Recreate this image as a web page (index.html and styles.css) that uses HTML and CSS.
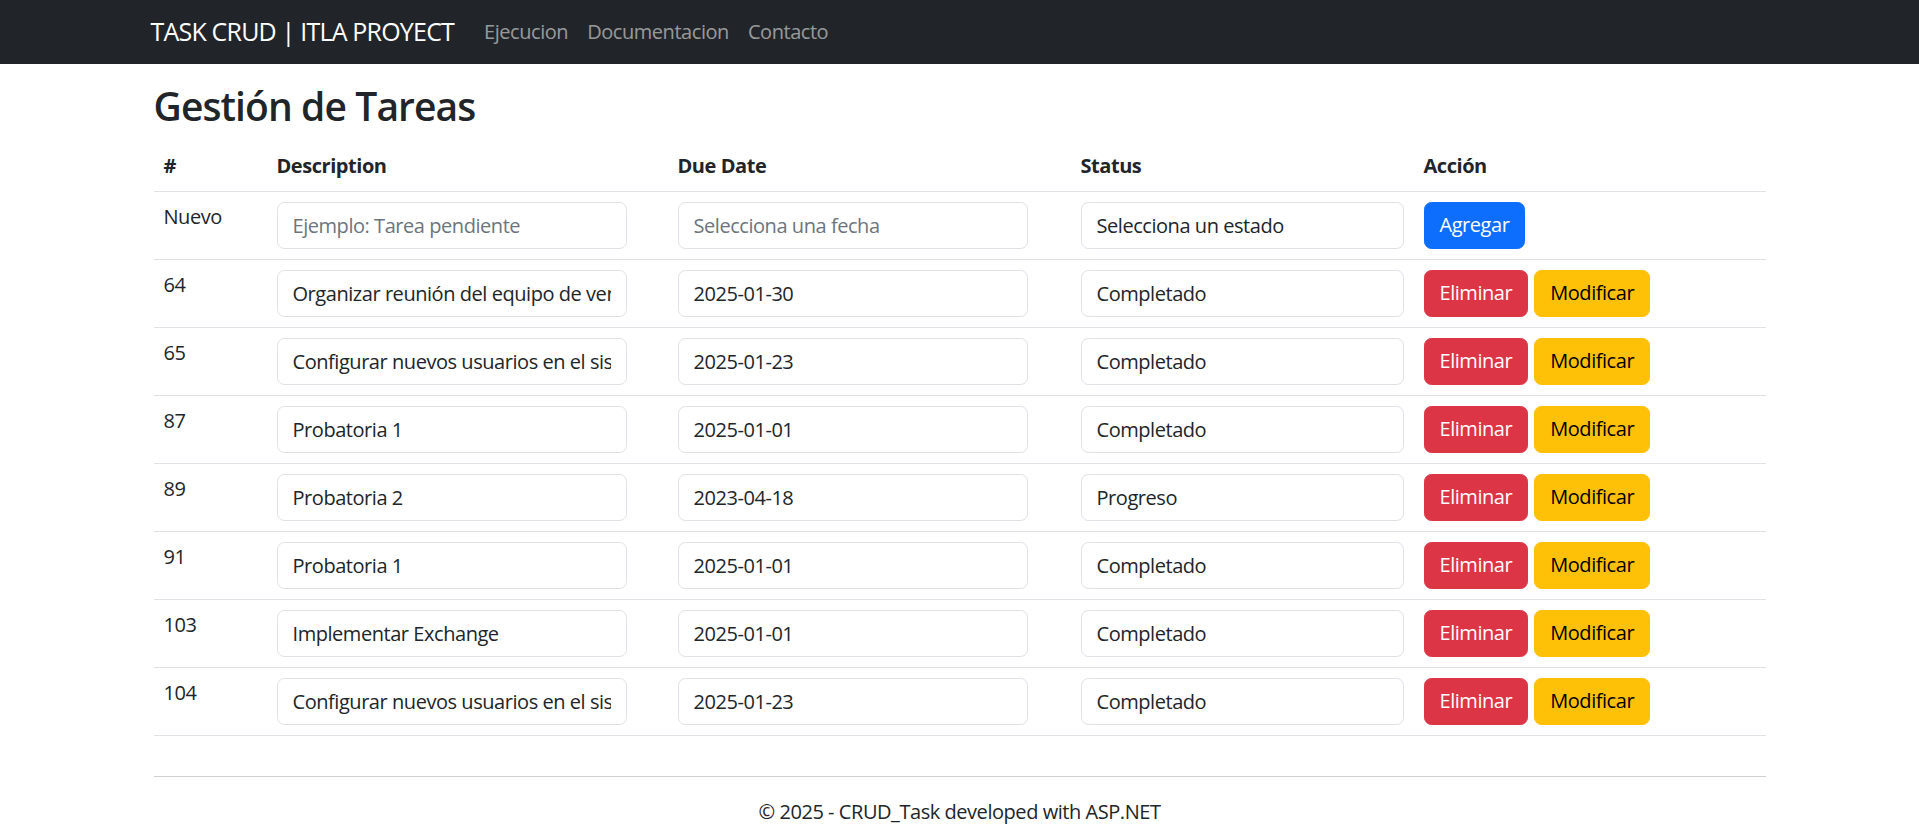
FILE: index.html
```html
<!DOCTYPE html>
<html lang="es">
<head>
<meta charset="utf-8">
<title>Gestión de Tareas - CRUD_Task</title>
<link rel="stylesheet" href="styles.css">
</head>
<body>
<header class="navbar">
  <div class="nav-container">
    <a class="brand" href="#">TASK CRUD | ITLA PROYECT</a>
    <ul class="nav-links">
      <li><a href="#">Ejecucion</a></li>
      <li><a href="#">Documentacion</a></li>
      <li><a href="#">Contacto</a></li>
    </ul>
  </div>
</header>

<main class="container">
  <h1 class="title">Gestión de Tareas</h1>
  <table class="tasks">
    <colgroup>
      <col class="c-id"><col class="c-desc"><col class="c-date"><col class="c-status"><col class="c-action">
    </colgroup>
    <thead>
      <tr><th>#</th><th>Description</th><th>Due Date</th><th>Status</th><th>Acción</th></tr>
    </thead>
    <tbody>
      <tr>
        <td>Nuevo</td>
        <td><input class="field field-fixed" type="text" placeholder="Ejemplo: Tarea pendiente"></td>
        <td><input class="field field-fixed" type="text" placeholder="Selecciona una fecha"></td>
        <td><input class="field" type="text" value="Selecciona un estado"></td>
        <td><button class="btn btn-primary">Agregar</button></td>
      </tr>
      <tr>
        <td>64</td>
        <td><input class="field field-fixed" type="text" value="Organizar reunión del equipo de ventas"></td>
        <td><input class="field field-fixed" type="text" value="2025-01-30"></td>
        <td><input class="field" type="text" value="Completado"></td>
        <td><div class="actions"><button class="btn btn-danger">Eliminar</button><button class="btn btn-warning">Modificar</button></div></td>
      </tr>
      <tr>
        <td>65</td>
        <td><input class="field field-fixed" type="text" value="Configurar nuevos usuarios en el sistema"></td>
        <td><input class="field field-fixed" type="text" value="2025-01-23"></td>
        <td><input class="field" type="text" value="Completado"></td>
        <td><div class="actions"><button class="btn btn-danger">Eliminar</button><button class="btn btn-warning">Modificar</button></div></td>
      </tr>
      <tr>
        <td>87</td>
        <td><input class="field field-fixed" type="text" value="Probatoria 1"></td>
        <td><input class="field field-fixed" type="text" value="2025-01-01"></td>
        <td><input class="field" type="text" value="Completado"></td>
        <td><div class="actions"><button class="btn btn-danger">Eliminar</button><button class="btn btn-warning">Modificar</button></div></td>
      </tr>
      <tr>
        <td>89</td>
        <td><input class="field field-fixed" type="text" value="Probatoria 2"></td>
        <td><input class="field field-fixed" type="text" value="2023-04-18"></td>
        <td><input class="field" type="text" value="Progreso"></td>
        <td><div class="actions"><button class="btn btn-danger">Eliminar</button><button class="btn btn-warning">Modificar</button></div></td>
      </tr>
      <tr>
        <td>91</td>
        <td><input class="field field-fixed" type="text" value="Probatoria 1"></td>
        <td><input class="field field-fixed" type="text" value="2025-01-01"></td>
        <td><input class="field" type="text" value="Completado"></td>
        <td><div class="actions"><button class="btn btn-danger">Eliminar</button><button class="btn btn-warning">Modificar</button></div></td>
      </tr>
      <tr>
        <td>103</td>
        <td><input class="field field-fixed" type="text" value="Implementar Exchange"></td>
        <td><input class="field field-fixed" type="text" value="2025-01-01"></td>
        <td><input class="field" type="text" value="Completado"></td>
        <td><div class="actions"><button class="btn btn-danger">Eliminar</button><button class="btn btn-warning">Modificar</button></div></td>
      </tr>
      <tr>
        <td>104</td>
        <td><input class="field field-fixed" type="text" value="Configurar nuevos usuarios en el sistema"></td>
        <td><input class="field field-fixed" type="text" value="2025-01-23"></td>
        <td><input class="field" type="text" value="Completado"></td>
        <td><div class="actions"><button class="btn btn-danger">Eliminar</button><button class="btn btn-warning">Modificar</button></div></td>
      </tr>
    </tbody>
  </table>
</main>

<footer class="footer">
  <div class="footer-inner">© 2025 - CRUD_Task developed with ASP.NET</div>
</footer>
</body>
</html>
```

FILE: styles.css
```css
* { box-sizing: border-box; }

html, body {
  margin: 0;
  padding: 0;
  background: #fff;
}

body {
  font-family: "Open Sans", "Noto Sans", "DejaVu Sans", sans-serif;
  font-size: 20px;
  line-height: 1.5;
  letter-spacing: -0.45px;
  color: #212529;
}

/* Navbar */
.navbar {
  background: #212529;
  height: 64px;
  display: flex;
  align-items: center;
}

.nav-container {
  width: 1620px;
  margin: 0 auto;
  display: flex;
  align-items: center;
  padding-left: 1px;
}

.brand {
  color: #fff;
  text-decoration: none;
  font-size: 25px;
  line-height: 1.5;
  letter-spacing: -0.8px;
  margin-right: 20px;
  padding-bottom: 1px;
}

.nav-links {
  list-style: none;
  margin: 0;
  padding: 0;
  display: flex;
}

.nav-links a {
  display: block;
  padding: 0 9px 0 10px;
  color: rgba(255, 255, 255, 0.55);
  text-decoration: none;
  font-size: 20px;
}

/* Main */
.container {
  width: 1612px;
  margin: 0 auto;
  padding-top: 19px;
}

.title {
  margin: 0 0 11px 0;
  font-size: 39px;
  font-weight: 600;
  line-height: 1.2;
  letter-spacing: -0.9px;
}

.tasks {
  width: 100%;
  border-collapse: collapse;
  table-layout: fixed;
}

.c-id { width: 113px; }
.c-desc { width: 401px; }
.c-date { width: 403px; }
.c-status { width: 343px; }
.c-action { width: 352px; }

.tasks th,
.tasks td {
  padding: 10px;
  text-align: left;
  vertical-align: top;
  border-bottom: 1px solid #dee2e6;
}

.tasks th {
  font-weight: 700;
}

.field {
  display: block;
  width: 100%;
  height: 47px;
  padding: 7px 15px;
  font: inherit;
  letter-spacing: inherit;
  color: #212529;
  background: #fff;
  border: 1px solid #dee2e6;
  border-radius: 7.5px;
  outline: none;
}

.field-fixed { width: 350px; }

.field::placeholder {
  color: #6c757d;
  opacity: 1;
}

.actions {
  display: flex;
  gap: 6px;
}

.btn {
  height: 47px;
  padding: 7px 15px;
  font: inherit;
  letter-spacing: inherit;
  border: 1px solid transparent;
  border-radius: 7.5px;
  cursor: pointer;
}

.btn-primary { background: #0d6efd; border-color: #0d6efd; color: #fff; }
.btn-danger { background: #dc3545; border-color: #dc3545; color: #fff; }
.btn-warning { background: #ffc107; border-color: #ffc107; color: #000; }

/* Footer */
.footer {
  width: 1612px;
  margin: 40px auto 0;
  border-top: 1px solid #cfcfcf;
}

.footer-inner {
  text-align: center;
  padding-top: 20px;
  line-height: 30px;
}
```
